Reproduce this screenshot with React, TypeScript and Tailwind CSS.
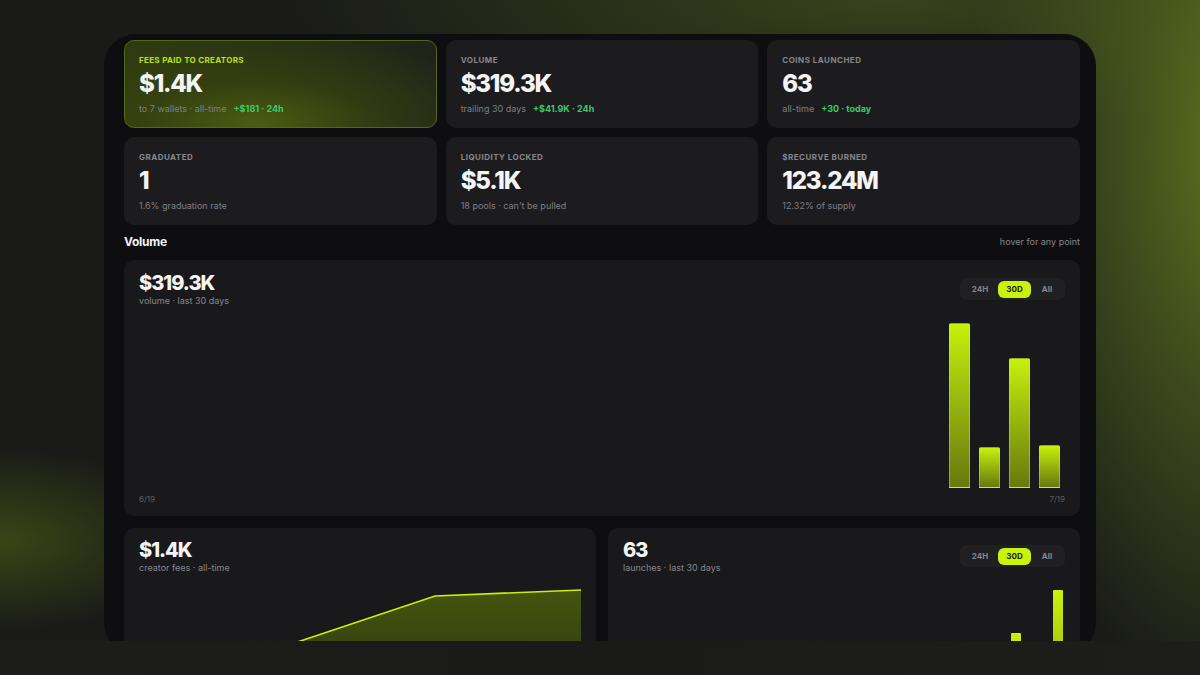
const stats = [
  { label: "FEES PAID TO CREATORS", value: "$1.4K", sub: "to 7 wallets · all-time", delta: "+$181 · 24h", hot: true },
  { label: "VOLUME", value: "$319.3K", sub: "trailing 30 days", delta: "+$41.9K · 24h" },
  { label: "COINS LAUNCHED", value: "63", sub: "all-time", delta: "+30 · today" },
  { label: "GRADUATED", value: "1", sub: "1.6% graduation rate" },
  { label: "LIQUIDITY LOCKED", value: "$5.1K", sub: "18 pools · can't be pulled" },
  { label: "$RECURVE BURNED", value: "123.24M", sub: "12.32% of supply" },
];

const volumeBars = [165, 41, 130, 43];
const launchBars = [0, 0, 0, 0, 0, 0, 0, 0, 0, 0, 0, 0, 0, 0, 0, 0, 0, 0, 0, 0, 0, 0, 0, 0, 0, 0, 67, 0, 0, 110];

function StatCard({ s }: { s: (typeof stats)[number] }) {
  return (
    <div
      className={
        s.hot
          ? "h-[88px] rounded-[10px] border border-[#56661a] bg-[radial-gradient(ellipse_260px_90px_at_42%_95%,#4a5c12_0%,rgba(58,72,14,0.6)_45%,rgba(30,33,24,0)_100%),linear-gradient(100deg,#2f3a10_0%,#272d15_55%,#1f211b_100%)] px-[14px] pt-[13px]"
          : "h-[88px] rounded-[10px] bg-[#1c1c1f] px-[15px] pt-[14px]"
      }
    >
      <div
        className={
          s.hot
            ? "text-[8px] leading-[12px] font-bold tracking-[0.04em] text-[#b9e21b]"
            : "text-[8px] leading-[12px] font-bold tracking-[0.06em] text-[#86868b]"
        }
      >
        {s.label}
      </div>
      <div className="mt-[5px] text-[24px] leading-[26px] font-extrabold tracking-[-0.05em] text-[#f4f4f4]">
        {s.value}
      </div>
      <div className="mt-[6px] flex items-center gap-[7px] text-[9px] leading-[12px] text-[#7e7e83]">
        <span>{s.sub}</span>
        {s.delta && <span className="font-bold text-[#3cc96c]">{s.delta}</span>}
      </div>
    </div>
  );
}

function RangeToggle() {
  return (
    <div className="flex h-[22px] items-center rounded-[7px] bg-[#202023] px-[2px]">
      <span className="flex h-[17px] w-[36px] items-center justify-center text-[8px] font-bold text-[#85858a]">24H</span>
      <span className="flex h-[17px] w-[33px] items-center justify-center rounded-[6px] bg-[#c9f20c] text-[8px] font-bold text-[#1a1d08]">30D</span>
      <span className="flex h-[17px] w-[32px] items-center justify-center text-[8px] font-bold text-[#85858a]">All</span>
    </div>
  );
}

function ChartHead({ value, sub, toggle }: { value: string; sub: string; toggle?: boolean }) {
  return (
    <div className="flex shrink-0 items-start justify-between">
      <div>
        <div className="text-[20px] leading-[22px] font-extrabold tracking-[-0.05em] text-[#f4f4f4]">{value}</div>
        <div className="text-[9px] leading-[13px] text-[#86868b]">{sub}</div>
      </div>
      {toggle && (
        <div className="mt-[6px]">
          <RangeToggle />
        </div>
      )}
    </div>
  );
}

export default function App() {
  return (
    <div
      className="flex h-[675px] w-[1200px] flex-col overflow-hidden bg-[#1a1b18] bg-[radial-gradient(ellipse_280px_560px_at_104%_22%,#61761f_0%,rgba(80,98,30,0.75)_40%,rgba(26,27,24,0)_100%),radial-gradient(ellipse_600px_130px_at_74%_0%,rgba(66,80,28,0.75)_0%,rgba(26,27,24,0)_100%),radial-gradient(ellipse_200px_90px_at_0%_80%,#3a4515_0%,rgba(26,27,24,0)_100%)]"
      style={{ fontFamily: "Inter, 'Liberation Sans', sans-serif" }}
    >
      <div className="h-[641px] shrink-0 overflow-hidden px-[104px] pt-[34px]">
        <div className="flex h-[620px] flex-col overflow-hidden rounded-[32px] bg-[#0e0e10] pt-[6px] pr-[16px] pl-[20px]">
          <div className="grid shrink-0 grid-cols-3 gap-[9px]">
            {stats.map((s) => (
              <StatCard key={s.label} s={s} />
            ))}
          </div>

          <div className="flex h-[35px] shrink-0 items-center justify-between pb-[2px]">
            <span className="text-[12px] font-bold tracking-[-0.02em] text-[#f2f2f2]">Volume</span>
            <span className="text-[9px] text-[#86868b]">hover for any point</span>
          </div>

          <div className="flex h-[256px] shrink-0 flex-col rounded-[10px] bg-[#19191b] px-[15px] pt-[12px] pb-[12px]">
            <ChartHead value="$319.3K" sub="volume · last 30 days" toggle />
            <div className="flex flex-1 items-end justify-end gap-[9px] pr-[5px]">
              {volumeBars.map((h, i) => (
                <div
                  key={i}
                  className="w-[21px] rounded-t-[2px] border border-[#d2f53a]/40 bg-gradient-to-b from-[#c8f00b] to-[#687a0c]"
                  style={{ height: h }}
                />
              ))}
            </div>
            <div className="mt-[6px] flex justify-between text-[8px] leading-[10px] text-[#5e5e63]">
              <span>6/19</span>
              <span>7/19</span>
            </div>
          </div>

          <div className="mt-[12px] grid shrink-0 grid-cols-2 gap-[12px]">
            <div className="flex h-[200px] flex-col rounded-[10px] bg-[#19191b] px-[15px] pt-[11px]">
              <ChartHead value="$1.4K" sub="creator fees · all-time" />
              <svg className="mt-[11px] shrink-0" width="442" height="130" viewBox="0 0 442 130">
                <defs>
                  <linearGradient id="fees" x1="0" y1="0" x2="0" y2="1">
                    <stop offset="0" stopColor="#45540f" />
                    <stop offset="1" stopColor="#2a3210" />
                  </linearGradient>
                </defs>
                <path d="M0,110 L296,11 L442,5 L442,130 L0,130 Z" fill="url(#fees)" />
                <path d="M0,110 L296,11 L442,5" fill="none" stroke="#c8f00b" strokeWidth="1.6" />
              </svg>
            </div>

            <div className="flex h-[200px] flex-col rounded-[10px] bg-[#19191b] px-[15px] pt-[11px]">
              <ChartHead value="63" sub="launches · last 30 days" toggle />
              <div className="mt-[16px] flex h-[110px] shrink-0 items-end justify-end gap-[4px] pr-[2px]">
                {launchBars.map((h, i) => (
                  <div
                    key={i}
                    className="w-[10px] shrink-0 rounded-t-[1px] bg-gradient-to-b from-[#cbf20d] to-[#8fa80c]"
                    style={{ height: h }}
                  />
                ))}
              </div>
            </div>
          </div>
        </div>
      </div>
      <div className="h-[34px] shrink-0 bg-[linear-gradient(90deg,#1c1d19_0%,#1a1b18_50%,#1d1e1a_100%)]" />
    </div>
  );
}
